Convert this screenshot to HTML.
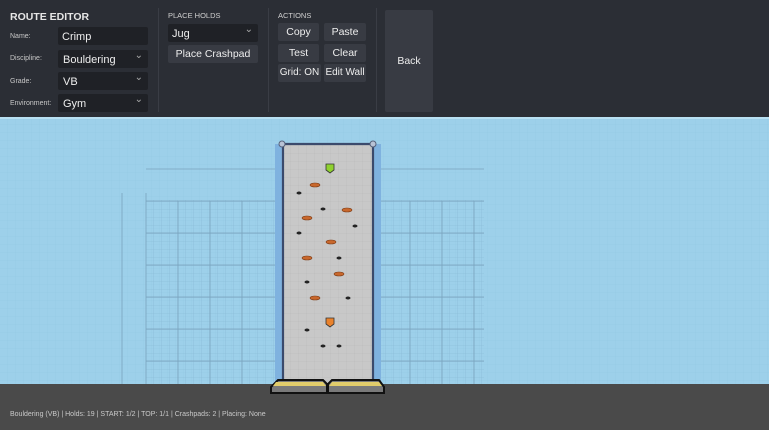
<!DOCTYPE html>
<html><head><meta charset="utf-8"><style>
*{margin:0;padding:0;box-sizing:border-box}
body{width:769px;height:430px;overflow:hidden;position:relative;font-family:"Liberation Sans",sans-serif;background:#9ccfea}
.top{position:absolute;left:0;top:0;width:769px;height:117px;background:#2b2e35;color:#e6e6e6}
.a{position:absolute;white-space:nowrap}
.lbl{font-size:7px;color:#c8c8c8}
.inp{position:absolute;background:#1f2126;border-radius:2px;font-size:11px;color:#eee;padding:4px 0 0 4px;height:18px;white-space:nowrap}
.sel::after{content:"⌄";position:absolute;right:5px;top:0;font-size:10px;color:#aaa}
.btn{position:absolute;background:#383b43;border-radius:2px;font-size:10.5px;color:#eee;text-align:center;height:18px;line-height:18px;white-space:nowrap;overflow:hidden}
.div{position:absolute;top:8px;width:1px;height:104px;background:#3a3d45}
.hdr{font-size:7.5px;color:#d0d0d0}
</style></head><body>
<svg class="a" style="left:0;top:117px" width="769" height="267">
<defs>
<pattern id="f" width="8" height="8" patternUnits="userSpaceOnUse"><path d="M8 0V8M0 8H8" stroke="#93c6e2" stroke-width="0.5" fill="none"/></pattern>
<pattern id="g" x="146" y="-3" width="8" height="8" patternUnits="userSpaceOnUse"><path d="M8 0V8M0 8H8" stroke="#86b6d2" stroke-width="0.6" fill="none"/></pattern>
<pattern id="w" x="283" y="29" width="8" height="8" patternUnits="userSpaceOnUse"><path d="M8 0V8M0 8H8" stroke="#b6b6b6" stroke-width="0.5" fill="none"/></pattern>
</defs>
<rect width="769" height="267" fill="#9dd0ea"/>
<rect width="769" height="267" fill="url(#f)"/>
<rect y="0" width="769" height="2" fill="#b8e0f2"/>
<rect x="146" y="83" width="338" height="184" fill="url(#g)"/>
<path d="M146 52H484M146 84H484M146 116H484M146 148H484M146 180H484M146 212H484M146 244H484M122 76V267M146 76V267M178 84V267M210 84V267M242 84V267M410 84V267M442 84V267M474 84V267" stroke="#7aa3bd" stroke-width="0.8"/>
<rect x="275" y="27" width="106" height="240" fill="#7fb2df"/>
<rect x="283" y="27" width="90" height="240" fill="#c8c8c8"/>
<rect x="283" y="27" width="90" height="240" fill="url(#w)"/>
<path d="M283 27V267M373 27V267M283 27H373" stroke="#3b4a6c" stroke-width="2.2" fill="none"/>
<circle cx="282" cy="27" r="3" fill="#b8c3d6" stroke="#55617a"/><circle cx="373" cy="27" r="3" fill="#b8c3d6" stroke="#55617a"/>
</svg>
<svg class="a" style="left:0;top:0" width="769" height="430">
<g fill="#c8682d" stroke="#7a3a15" stroke-width="0.6">
<ellipse cx="315" cy="185" rx="5" ry="2"/><ellipse cx="347" cy="210" rx="5" ry="2"/><ellipse cx="307" cy="218" rx="5" ry="2"/><ellipse cx="331" cy="242" rx="5" ry="2"/><ellipse cx="307" cy="258" rx="5" ry="2"/><ellipse cx="339" cy="274" rx="5" ry="2"/><ellipse cx="315" cy="298" rx="5" ry="2"/>
</g>
<path d="M326 164h8v6l-4 3-4-3z" fill="#8fd12f" stroke="#333" stroke-width="0.8"/>
<path d="M326 318h8v6l-4 3-4-3z" fill="#e9822c" stroke="#333" stroke-width="0.8"/>
<g fill="#222">
<ellipse cx="299" cy="193" rx="2.5" ry="1.5"/><ellipse cx="323" cy="209" rx="2.5" ry="1.5"/><ellipse cx="355" cy="226" rx="2.5" ry="1.5"/><ellipse cx="299" cy="233" rx="2.5" ry="1.5"/><ellipse cx="339" cy="258" rx="2.5" ry="1.5"/><ellipse cx="307" cy="282" rx="2.5" ry="1.5"/><ellipse cx="348" cy="298" rx="2.5" ry="1.5"/><ellipse cx="307" cy="330" rx="2.5" ry="1.5"/><ellipse cx="323" cy="346" rx="2.5" ry="1.5"/><ellipse cx="339" cy="346" rx="2.5" ry="1.5"/>
</g>
</svg>
<div class="a" style="left:0;top:384px;width:769px;height:46px;background:#4a4a4a"></div>
<svg class="a" style="left:268px;top:378px" width="120" height="18">
<path d="M10 2h45l4 4v9H3V9z" fill="#7a7a7a" stroke="#111" stroke-width="2"/>
<path d="M8 4h47l3 4H5z" fill="#e2cd6b"/>
<path d="M64 2h47l5 7v6H60V6z" fill="#7a7a7a" stroke="#111" stroke-width="2"/>
<path d="M64 4h47l3 4H61z" fill="#e2cd6b"/>
</svg>
<div class="a" style="left:10px;top:411px;font-size:7px;color:#c9c9c9">Bouldering (VB) | Holds: 19 | START: 1/2 | TOP: 1/1 | Crashpads: 2 | Placing: None</div>
<div class="top">
<div class="a" style="left:10px;top:11px;font-size:10.5px;font-weight:bold">ROUTE EDITOR</div>
<div class="a lbl" style="left:10px;top:33px">Name:</div>
<div class="a lbl" style="left:10px;top:55px">Discipline:</div>
<div class="a lbl" style="left:10px;top:78px">Grade:</div>
<div class="a lbl" style="left:10px;top:100px">Environment:</div>
<div class="inp" style="left:58px;top:27px;width:90px">Crimp</div>
<div class="inp sel" style="left:58px;top:50px;width:90px;padding-left:5px">Bouldering</div>
<div class="inp sel" style="left:58px;top:72px;width:90px;padding-left:5px">VB</div>
<div class="inp sel" style="left:58px;top:94px;width:90px;padding-left:5px">Gym</div>
<div class="div" style="left:158px"></div>
<div class="a hdr" style="left:168px;top:11px">PLACE HOLDS</div>
<div class="inp sel" style="left:168px;top:24px;width:90px">Jug</div>
<div class="btn" style="left:168px;top:45px;width:90px">Place Crashpad</div>
<div class="div" style="left:268px"></div>
<div class="a hdr" style="left:278px;top:11px">ACTIONS</div>
<div class="btn" style="left:278px;top:23px;width:41px">Copy</div>
<div class="btn" style="left:324px;top:23px;width:42px">Paste</div>
<div class="btn" style="left:278px;top:44px;width:41px">Test</div>
<div class="btn" style="left:324px;top:44px;width:42px">Clear</div>
<div class="btn" style="left:278px;top:64px;width:43px;font-size:10px">Grid: ON</div>
<div class="btn" style="left:324px;top:64px;width:42px;font-size:10px">Edit Wall</div>
<div class="div" style="left:376px"></div>
<div class="btn" style="left:385px;top:10px;width:48px;height:102px;line-height:102px">Back</div>
</div>
</body></html>
